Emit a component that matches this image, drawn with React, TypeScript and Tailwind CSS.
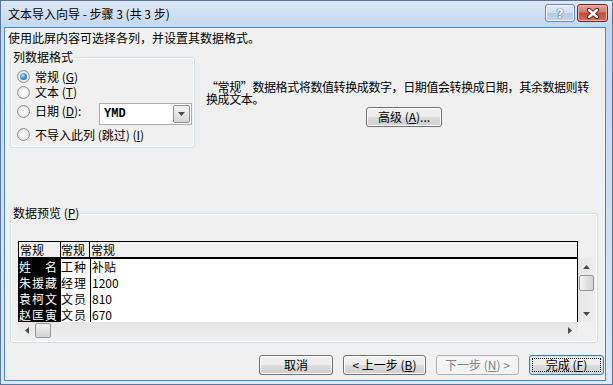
import React from "react";

const cjk = "font-['Noto_Sans_CJK_SC','Noto_Sans',sans-serif]";

const btnNormal =
  "border-[#707070] bg-[linear-gradient(to_bottom,#f2f2f2_0%,#ebebeb_49%,#dddddd_50%,#cfcfcf_100%)] shadow-[inset_0_0_0_1px_#fcfcfc] text-black";

function Key({ k }: { k: string }) {
  return <span className="underline underline-offset-[1px]">{k}</span>;
}

function Tri({ dir }: { dir: "up" | "down" | "left" | "right" }) {
  const vert = dir === "up" || dir === "down";
  const pts = {
    up: "0,4 7,4 3.5,0",
    down: "0,0 7,0 3.5,4",
    left: "4,0 4,7 0,3.5",
    right: "0,0 0,7 4,3.5",
  }[dir];
  return (
    <svg width={vert ? 7 : 4} height={vert ? 4 : 7} viewBox={vert ? "0 0 7 4" : "0 0 4 7"}>
      <polygon points={pts} fill="#4a4a4a" />
    </svg>
  );
}

function Radio({ checked }: { checked?: boolean }) {
  return (
    <div className="w-[13px] h-[13px] shrink-0 rounded-full border border-[#8e8f8f] bg-[radial-gradient(circle_at_50%_50%,#ffffff_0%,#f2f2f2_45%,#cdcdcd_100%)] flex items-center justify-center">
      {checked && (
        <div className="w-[7px] h-[7px] rounded-full bg-[radial-gradient(circle_at_40%_35%,#b5e1ff_0%,#3b8ad6_50%,#1d4f8c_100%)]" />
      )}
    </div>
  );
}

function Thumb({ vertical }: { vertical?: boolean }) {
  return (
    <div
      className={
        vertical
          ? "w-[15px] h-[16px] mx-auto rounded-[2px] border border-[#959595] bg-[linear-gradient(to_right,#f5f5f5,#e2e2e2_50%,#d4d4d4)]"
          : "w-[16px] h-[15px] rounded-[2px] border border-[#959595] bg-[linear-gradient(to_bottom,#f5f5f5,#e2e2e2_50%,#d4d4d4)]"
      }
    />
  );
}

const rows = [
  ["姓　名", "工种", "补贴"],
  ["朱援藏", "经理", "1200"],
  ["袁柯文", "文员", "810"],
  ["赵匡寅", "文员", "670"],
];

export default function App() {
  return (
    <div className={`w-[613px] h-[385px] border border-[#5a7698] bg-[#d3e2f3] flex flex-col text-[12px] text-black ${cjk}`}>
      {/* title bar */}
      <div className="h-[26px] flex items-start bg-[linear-gradient(to_bottom,#dce8f6,#c4d7ed)]">
        <div className="pl-[7px] pt-[6px] leading-[14px]">文本导入向导 - 步骤 3 (共 3 步)</div>
        <div className="ml-auto mt-[3px] mr-[4px] flex gap-[2px]">
          <div className="w-[30px] h-[18px] rounded-[3px] border border-[#6c88ad] bg-[linear-gradient(to_bottom,#e6eff9_0%,#cbdcef_50%,#b3cbe6_51%,#c3d7ee_100%)] shadow-[inset_0_0_0_1px_#f2f7fc] flex items-center justify-center">
            <span className="font-['DejaVu_Sans',sans-serif] font-bold text-[13px] leading-[13px] text-white [text-shadow:0_0_1px_#2c3e55,0_0_1px_#2c3e55]">?</span>
          </div>
          <div className="w-[31px] h-[18px] rounded-[3px] border border-[#6b2a20] bg-[linear-gradient(to_bottom,#e5a69b_0%,#d6786a_45%,#c24a36_50%,#d2705d_100%)] shadow-[inset_0_0_0_1px_#eab3a8] flex items-center justify-center">
            <svg width="14" height="11" viewBox="0 0 14 11">
              <path d="M3 2 L11 9 M11 2 L3 9" stroke="#4a150e" strokeWidth="4.2" strokeLinecap="round" />
              <path d="M3 2 L11 9 M11 2 L3 9" stroke="#ffffff" strokeWidth="2.4" strokeLinecap="round" />
            </svg>
          </div>
        </div>
      </div>

      {/* frame + client */}
      <div className="flex-1 flex pl-[3px] pr-[6px] pb-[3px] bg-[linear-gradient(to_bottom,#c4d7ed,#dce8f6)]">
        <div className="w-[602px] h-[354px] border border-[#4a88c8] bg-[#f0f0f0] flex flex-col">
          <div className="pl-[3px] pt-[3px] leading-[14px]">使用此屏内容可选择各列，并设置其数据格式。</div>

          <div className="mt-[12px] ml-[5px] flex items-start">
            {/* column format group */}
            <div className="relative shrink-0 w-[185px] h-[91px] rounded-[3px] border border-[#d5dfe5] shadow-[inset_0_0_0_1px_#ffffff] pt-[11px] pl-[6px] flex flex-col">
              <span className="absolute top-[-7px] left-[1px] px-[1px] bg-[#f0f0f0] leading-[12px]">列数据格式</span>
              <div className="h-[16px] flex items-center gap-[5px]">
                <Radio checked />
                <span className="leading-[14px]">常规 (<Key k="G" />)</span>
              </div>
              <div className="h-[17px] flex items-center gap-[5px]">
                <Radio />
                <span className="leading-[14px]">文本 (<Key k="T" />)</span>
              </div>
              <div className="h-[22px] flex items-center gap-[5px]">
                <Radio />
                <span className="w-[59px] leading-[14px]">日期 (<Key k="D" />):</span>
                <div className="mt-[5px] w-[93px] h-[22px] shrink-0 border border-[#abadb3] bg-white flex items-center">
                  <span className="pl-[4px] font-['Liberation_Mono',monospace] font-bold text-[12px] leading-[12px]">YMD</span>
                  <div className="ml-auto mr-[1px] w-[17px] h-[18px] rounded-[2px] border border-[#8f8f8f] bg-[linear-gradient(to_bottom,#f4f4f4,#e6e6e6_50%,#d6d6d6)] flex items-center justify-center">
                    <Tri dir="down" />
                  </div>
                </div>
              </div>
              <div className="h-[26px] flex items-center gap-[5px]">
                <Radio />
                <span className="leading-[14px]">不导入此列 (跳过) (<Key k="I" />)</span>
              </div>
            </div>

            {/* description */}
            <div className="ml-[11px] mt-[24px] w-[398px] shrink-0 flex flex-col">
              <div className="leading-[12px] whitespace-nowrap tracking-[-0.4px]">
                “常规”数据格式将数值转换成数字，日期值会转换成日期，其余数据则转
                <br />
                换成文本。
              </div>
              <button className={`mt-[2px] ml-[160px] w-[76px] h-[20px] rounded-[3px] border flex items-center justify-center leading-[12px] ${btnNormal}`}>
                高级 (<Key k="A" />)...
              </button>
            </div>
          </div>

          {/* data preview group */}
          <div className="relative mt-[65px] ml-[5px] w-[588px] h-[130px] rounded-[3px] border border-[#d5dfe5] shadow-[inset_0_0_0_1px_#ffffff] pt-[27px] pl-[7px]">
            <span className="absolute top-[-7px] left-[1px] px-[1px] bg-[#f0f0f0] leading-[12px]">数据预览 (<Key k="P" />)</span>
            <div className="flex items-start">
              <div className="w-[560px] flex flex-col">
                {/* header */}
                <div className="h-[18px] flex border-t border-l border-r border-b-2 border-black bg-[#f0f0f0] leading-[15px]">
                  <div className="w-[41px] pl-[1px]">常规</div>
                  <div className="w-[29px] border-l border-black">常规</div>
                  <div className="flex-1 border-l border-black pl-[1px]">常规</div>
                </div>
                {/* body */}
                <div className="h-[63px] overflow-hidden flex border-r border-black bg-white text-[12px] leading-[16px] tracking-[1px]">
                  <div className="w-[43px] bg-black text-white pl-[1px] flex flex-col">
                    {rows.map((r) => (
                      <div key={r[0]} className="h-[16px] whitespace-nowrap">{r[0]}</div>
                    ))}
                  </div>
                  <div className="w-[29px] flex flex-col">
                    {rows.map((r) => (
                      <div key={r[0]} className="h-[16px] whitespace-nowrap">{r[1]}</div>
                    ))}
                  </div>
                  <div className="flex-1 border-l border-black pl-[1px] flex flex-col tracking-normal">
                    {rows.map((r) => (
                      <div key={r[0]} className="h-[16px] whitespace-nowrap">{r[2]}</div>
                    ))}
                  </div>
                </div>
                {/* horizontal scrollbar */}
                <div className="h-[16px] flex items-center bg-[linear-gradient(to_bottom,#e6e6e6,#efefef)]">
                  <div className="w-[17px] h-[16px] flex items-center justify-center">
                    <Tri dir="left" />
                  </div>
                  <Thumb />
                  <div className="ml-auto w-[17px] h-[16px] flex items-center justify-center">
                    <Tri dir="right" />
                  </div>
                </div>
              </div>
              {/* vertical scrollbar */}
              <div className="mt-[17px] w-[17px] h-[64px] flex flex-col bg-[linear-gradient(to_right,#e6e6e6,#efefef)]">
                <div className="h-[17px] flex items-center justify-center">
                  <Tri dir="up" />
                </div>
                <Thumb vertical />
                <div className="mt-auto h-[17px] flex items-center justify-center">
                  <Tri dir="down" />
                </div>
              </div>
            </div>
          </div>

          {/* bottom buttons */}
          <div className="mt-[12px] pr-[1px] flex justify-end gap-[10px] leading-[12px]">
            <button className={`w-[74px] h-[20px] rounded-[3px] border flex items-center justify-center ${btnNormal}`}>取消</button>
            <button className={`w-[83px] h-[20px] rounded-[3px] border flex items-center justify-center ${btnNormal}`}>
              &lt; 上一步 (<Key k="B" />)
            </button>
            <button className="w-[83px] h-[20px] rounded-[3px] border border-[#adb2b5] bg-[#f4f4f4] text-[#838383] flex items-center justify-center">
              下一步 (<Key k="N" />) &gt;
            </button>
            <button className="w-[75px] h-[20px] rounded-[3px] border border-[#3c7fb1] bg-[linear-gradient(to_bottom,#f2f2f2_0%,#ebebeb_49%,#dddddd_50%,#cfcfcf_100%)] shadow-[inset_0_0_0_1px_#c4e5f8] p-[2px] flex">
              <span className="flex-1 border border-dotted border-black flex items-center justify-center">
                完成 (<Key k="F" />)
              </span>
            </button>
          </div>
        </div>
      </div>
    </div>
  );
}
